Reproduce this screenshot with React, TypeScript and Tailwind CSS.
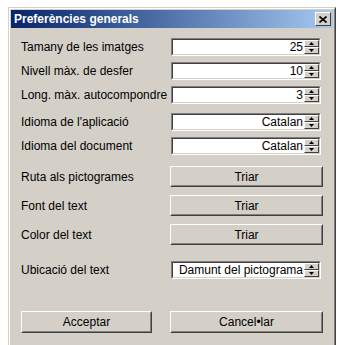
import React from 'react';

const font = { fontFamily: '"Liberation Sans", Arial, sans-serif' };

function Spinner() {
    return (
        <div className="flex flex-col w-[15px] h-full">
            {[0, 1].map((i) => (
                <div
                    key={i}
                    className="flex-1 bg-[#d4d0c8] border border-t-white border-l-white border-r-[#404040] border-b-[#404040] flex items-center justify-center"
                >
                    <svg width="5" height="3" viewBox="0 0 5 3">
                        {i === 0 ? <path d="M2.5 0 L5 3 L0 3 Z" fill="#000" /> : <path d="M0 0 L5 0 L2.5 3 Z" fill="#000" />}
                    </svg>
                </div>
            ))}
        </div>
    );
}

function SpinBox({ value }: { value: string }) {
    return (
        <div className="w-[150px] h-[18px] border border-t-[#808080] border-l-[#808080] border-r-white border-b-white">
            <div className="h-full border border-t-[#404040] border-l-[#404040] border-r-[#d4d0c8] border-b-[#d4d0c8] bg-white flex">
                <div className="flex-1 text-right text-[12px] leading-[14px] text-black pr-[1px]">{value}</div>
                <Spinner />
            </div>
        </div>
    );
}

function Button({ label, w, h }: { label: string; w: string; h: string }) {
    return (
        <div className={`${w} ${h} bg-[#d4d0c8] border border-t-white border-l-white border-r-[#404040] border-b-[#404040]`}>
            <div className="h-full border border-t-[#d4d0c8] border-l-[#d4d0c8] border-r-[#808080] border-b-[#808080] flex items-center justify-center text-[12px] text-black">
                {label}
            </div>
        </div>
    );
}

function Row({ label, value, h = 'h-[24px]', mt = '' }: { label: string; value: string; h?: string; mt?: string }) {
    return (
        <div className={`flex items-center ${h} ${mt}`}>
            <div className="w-[150px] text-[12px] text-black">{label}</div>
            <SpinBox value={value} />
        </div>
    );
}

function ButtonRow({ label }: { label: string }) {
    return (
        <div className="flex items-center h-[29px]">
            <div className="w-[149px] text-[12px] text-black">{label}</div>
            <Button label="Triar" w="w-[153px]" h="h-[21px]" />
        </div>
    );
}

export default function App() {
    return (
        <div className="w-[346px] h-[345px] overflow-hidden bg-white pl-[8px] pt-[7px]" style={font}>
            <div className="w-[328px] h-[345px] border border-t-[#d4d0c8] border-l-[#d4d0c8] border-r-[#404040] border-b-[#404040]">
                <div className="h-full border border-t-white border-l-white border-r-[#808080] border-b-[#808080] bg-[#d4d0c8] p-[1px]">
                    <div className="h-[18px] bg-gradient-to-r from-[#0a246a] to-[#a6caf0] flex items-center justify-between pl-[3px] pr-[2px]">
                        <span className="text-white font-bold text-[12px] leading-none">Preferències generals</span>
                        <div className="w-[16px] h-[14px] bg-[#d4d0c8] border border-t-white border-l-white border-r-[#404040] border-b-[#404040] flex items-center justify-center">
                            <svg width="8" height="7" viewBox="0 0 8 7">
                                <path d="M0.5 0.5 L7.5 6.5 M7.5 0.5 L0.5 6.5" stroke="#000" strokeWidth="1.6" />
                            </svg>
                        </div>
                    </div>
                    <div className="pl-[10px] pt-[7px]">
                        <Row label="Tamany de les imatges" value="25" />
                        <Row label="Nivell màx. de desfer" value="10" />
                        <Row label="Long. màx. autocompondre" value="3" />
                        <Row label="Idioma de l'aplicació" value="Catalan" mt="mt-[3px]" />
                        <Row label="Idioma del document" value="Catalan" />
                        <div className="mt-[4px]">
                            <ButtonRow label="Ruta als pictogrames" />
                            <ButtonRow label="Font del text" />
                            <ButtonRow label="Color del text" />
                        </div>
                        <Row label="Ubicació del text" value="Damunt del pictograma" mt="mt-[9px]" />
                        <div className="flex mt-[29px]">
                            <Button label="Acceptar" w="w-[131px]" h="h-[22px]" />
                            <div className="w-[18px]" />
                            <Button label="Cancel•lar" w="w-[153px]" h="h-[22px]" />
                        </div>
                    </div>
                </div>
            </div>
        </div>
    );
}
